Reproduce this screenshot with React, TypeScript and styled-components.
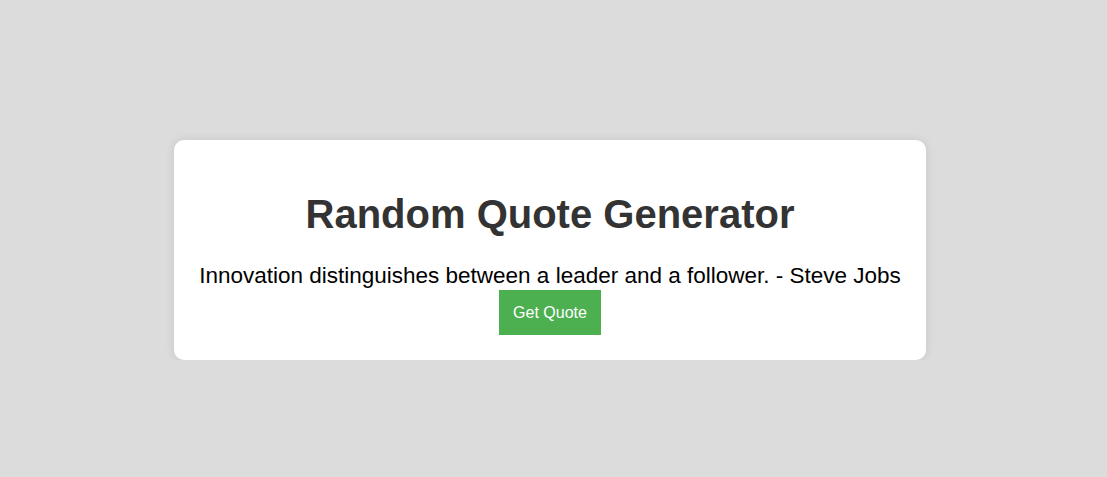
import React from "react";
import styled, { createGlobalStyle } from "styled-components";

const Global = createGlobalStyle`
  html, body { margin: 0; padding: 0; }
  body {
    background: #dcdcdc;
    font-family: "Liberation Sans", Arial, sans-serif;
  }
`;

const Page = styled.div`
  display: flex;
  justify-content: center;
  padding-top: 140px;
  padding-right: 7px;
`;

const Card = styled.div`
  width: 752px;
  box-sizing: border-box;
  background: #ffffff;
  border-radius: 10px;
  box-shadow: 0 0 10px rgba(0, 0, 0, 0.1);
  padding: 24px 20px 25px;
  text-align: center;
`;

const Title = styled.h1`
  margin: 27px 0 26px;
  font-size: 40px;
  line-height: 46px;
  font-weight: bold;
  color: #333333;
`;

const Quote = styled.div`
  font-size: 22.5px;
  line-height: 26px;
  color: #000000;
`;

const Button = styled.button`
  display: inline-block;
  margin-top: 1px;
  padding: 13px 14px;
  border: none;
  background: #4caf50;
  color: #ffffff;
  font-family: "Liberation Sans", Arial, sans-serif;
  font-size: 16px;
  line-height: 19px;
  cursor: pointer;
`;

export default function App() {
  return (
    <>
      <Global />
      <Page>
        <Card>
          <Title>Random Quote Generator</Title>
          <Quote>Innovation distinguishes between a leader and a follower. - Steve Jobs</Quote>
          <Button>Get Quote</Button>
        </Card>
      </Page>
    </>
  );
}
